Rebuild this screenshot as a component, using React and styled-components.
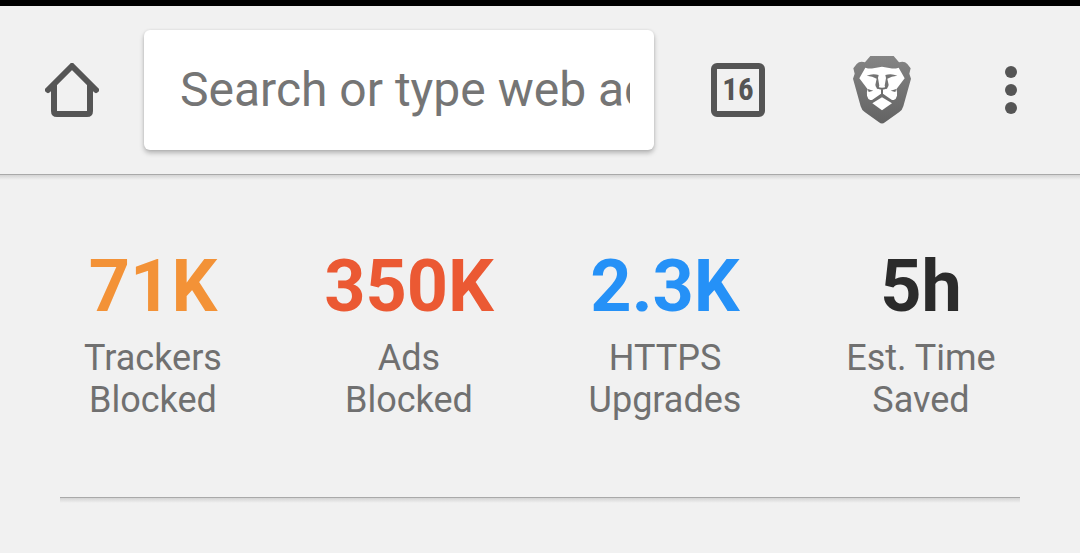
import React from 'react'
import styled, { createGlobalStyle } from 'styled-components'

const stats = [
  { value: '71K', label: ['Trackers', 'Blocked'], color: '#f39237' },
  { value: '350K', label: ['Ads', 'Blocked'], color: '#eb5933' },
  { value: '2.3K', label: ['HTTPS', 'Upgrades'], color: '#2591f7' },
  { value: '5h', label: ['Est. Time', 'Saved'], color: '#2b2b2b' },
]

const HomeIcon = () => (
  <svg width="54" height="54" viewBox="0 0 54 54" fill="none" stroke="#555" strokeWidth="6" strokeLinecap="round" strokeLinejoin="round" aria-hidden="true">
    <path d="M3 27 27 3l24 24M9 22v26q0 3 3 3h30q3 0 3-3V22" />
  </svg>
)

const LionIcon = () => (
  <svg width="60" height="70" viewBox="30 30 180 210" aria-hidden="true">
    <defs>
      <linearGradient id="mane" x1="0" y1="0" x2="0" y2="1">
        <stop offset="0" stopColor="#858585" />
        <stop offset="1" stopColor="#636363" />
      </linearGradient>
    </defs>
    <path
      fill="url(#mane)"
      d="M85 33h70l16 19q16-5 25 5l10 13-4 16 5 15-23 83q-3 11-12 17l-43 31q-9 7-18 0l-43-31q-9-6-12-17L33 101l5-15-4-16 10-13q9-10 25-5z"
    />
    <path
      fill="#fff"
      d="M70 68q12 4 24 2l26-5 26 5q12 2 24-2l18 32-25 33q4 10 2 19-2 10-10 13-9 1-16-4l-19-14-19 14q-7 5-16 4-8-3-10-13-2-10 2-19L52 100z"
    />
    <path fill="#747474" d="M74 92q18-8 36-2l-2 9 4 23-4 11-6-7-2-6 4-19q-12-8-30-9zM166 92q-18-8-36-2l2 9-4 23 4 11 6-7 2-6-4-19q12-8 30-9z" />
    <path
      fill="none"
      stroke="#6e6e6e"
      strokeWidth="6"
      strokeLinejoin="round"
      d="M105 127q15 8 30 0M120 130v18M93 167l27-19 27 19"
    />
    <path fill="#6e6e6e" d="m77 132 17 5-14 4zM163 132l-17 5 14 4z" />
    <path fill="#fff" d="m120 157 30 18-30 21-29-21z" />
  </svg>
)

const DotsIcon = () => (
  <svg width="12" height="48" viewBox="0 0 12 48" fill="#555" aria-hidden="true">
    <circle cx="6" cy="6" r="6" />
    <circle cx="6" cy="24" r="6" />
    <circle cx="6" cy="42" r="6" />
  </svg>
)

const App = () => (
  <Page>
    <GlobalStyle />
    <Toolbar>
      <IconButton aria-label="Home">
        <HomeIcon />
      </IconButton>
      <Search type="text" aria-label="Search" placeholder="Search or type web address" />
      <Actions>
        <IconButton aria-label="Open tabs">
          <TabCount>16</TabCount>
        </IconButton>
        <IconButton aria-label="Shields">
          <LionIcon />
        </IconButton>
        <MenuButton aria-label="Menu">
          <DotsIcon />
        </MenuButton>
      </Actions>
    </Toolbar>
    <Shadow />
    <Stats>
      {stats.map(({ value, label, color }) => (
        <Stat key={value}>
          <Value $color={color}>{value}</Value>
          <Label>
            {label[0]}
            <br />
            {label[1]}
          </Label>
        </Stat>
      ))}
    </Stats>
    <Divider />
  </Page>
)

const GlobalStyle = createGlobalStyle`
  * {
    box-sizing: border-box;
  }

  body {
    margin: 0;
    background: #f1f1f1;
    font-family: Roboto, 'Liberation Sans', sans-serif;
  }
`

const Page = styled.main`
  border-top: 6px solid #000;
`

const Toolbar = styled.header`
  display: flex;
  align-items: center;
  padding: 24px 12px 24px 0;
`

const Search = styled.input`
  flex: 1;
  min-width: 0;
  height: 120px;
  padding: 0 24px 2px 36px;
  border: none;
  outline: none;
  border-radius: 6px;
  background: #fff;
  box-shadow: 0 3px 5px rgba(0, 0, 0, 0.26), 0 0 3px rgba(0, 0, 0, 0.08);
  color: #333;
  font-family: inherit;
  font-size: 48px;

  &::placeholder {
    color: #757575;
    opacity: 1;
  }
`

const Actions = styled.div`
  display: flex;
  margin-left: 12px;
`

const IconButton = styled.button`
  display: flex;
  flex-shrink: 0;
  justify-content: center;
  align-items: center;
  width: 144px;
  height: 120px;
  padding: 0;
  border: none;
  background: none;
  font-family: inherit;
  cursor: pointer;
`

const MenuButton = styled(IconButton)`
  width: 114px;
`

const TabCount = styled.span`
  display: flex;
  justify-content: center;
  align-items: center;
  width: 54px;
  height: 54px;
  padding-bottom: 2px;
  border: 6px solid #555;
  border-radius: 6px;
  color: #555;
  font-family: 'Roboto Condensed', Roboto, 'Liberation Sans', sans-serif;
  font-size: 31px;
  font-weight: 700;
`

const Shadow = styled.div`
  height: 6px;
  border-top: 1px solid #a9a9a9;
  background: linear-gradient(#d4d4d4, #f1f1f1);
`

const Stats = styled.section`
  display: grid;
  grid-template-columns: repeat(4, 1fr);
  padding: 65px 31px 76px 25px;
`

const Stat = styled.div`
  text-align: center;
`

const Value = styled.div`
  margin-bottom: 8px;
  color: ${({ $color }) => $color};
  font-size: 72px;
  font-weight: 700;
  line-height: 84px;
`

const Label = styled.div`
  color: #707070;
  font-size: 36px;
  line-height: 42px;
`

const Divider = styled(Shadow)`
  margin: 0 60px;
`

export default App
